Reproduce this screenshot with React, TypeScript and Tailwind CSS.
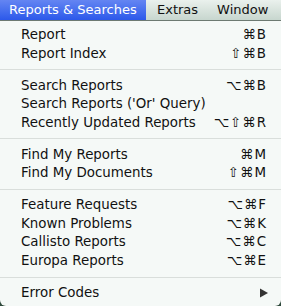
type Item = { label: string; keys?: string; submenu?: boolean };

const groups: Item[][] = [
	[
		{ label: "Report", keys: "⌘B" },
		{ label: "Report Index", keys: "⇧⌘B" },
	],
	[
		{ label: "Search Reports", keys: "⌥⌘B" },
		{ label: "Search Reports ('Or' Query)" },
		{ label: "Recently Updated Reports", keys: "⌥⇧⌘R" },
	],
	[
		{ label: "Find My Reports", keys: "⌘M" },
		{ label: "Find My Documents", keys: "⇧⌘M" },
	],
	[
		{ label: "Feature Requests", keys: "⌥⌘F" },
		{ label: "Known Problems", keys: "⌥⌘K" },
		{ label: "Callisto Reports", keys: "⌥⌘C" },
		{ label: "Europa Reports", keys: "⌥⌘E" },
	],
	[{ label: "Error Codes", submenu: true }],
];

const MenuRow = ({ item }: { item: Item }) => (
	<div className="flex h-[18.7px] items-center justify-between pl-[21px] pr-[14px]">
		<span>{item.label}</span>
		{item.keys && <span className="tracking-[1px]">{item.keys}</span>}
		{item.submenu && (
			<svg width="10" height="10" viewBox="0 0 10 10" className="mr-[-2px]">
				<path d="M1 0.5 L9 5 L1 9.5 Z" fill="#333" />
			</svg>
		)}
	</div>
);

export default function App() {
	return (
		<div
			className="h-[306px] w-[281px] overflow-hidden bg-[#2f4a3c] text-[13.4px] text-[#111]"
			style={{ fontFamily: '"DejaVu Sans", sans-serif' }}
		>
			<div className="flex h-[21px] whitespace-nowrap border-b border-[#6d7a72] bg-gradient-to-b from-[#eaf1ed] to-[#c7d6ce] text-[13px]">
				<div className="flex w-[146px] items-center bg-gradient-to-b from-[#6485f2] to-[#2c58ea] pl-[9px] text-white">
					Reports &amp; Searches
				</div>
				<div className="flex items-center pl-[11px]">Extras</div>
				<div className="flex items-center pl-[19px]">Window</div>
			</div>
			<div className="h-[285px] rounded-b-[6px] bg-[#f5f9f7] pt-[5px]">
				{groups.map((g, i) => (
					<div key={i}>
						{i > 0 && <div className="my-[6px] h-px bg-[#d9dedb]" />}
						{g.map((item) => (
							<MenuRow key={item.label} item={item} />
						))}
					</div>
				))}
			</div>
		</div>
	);
}
